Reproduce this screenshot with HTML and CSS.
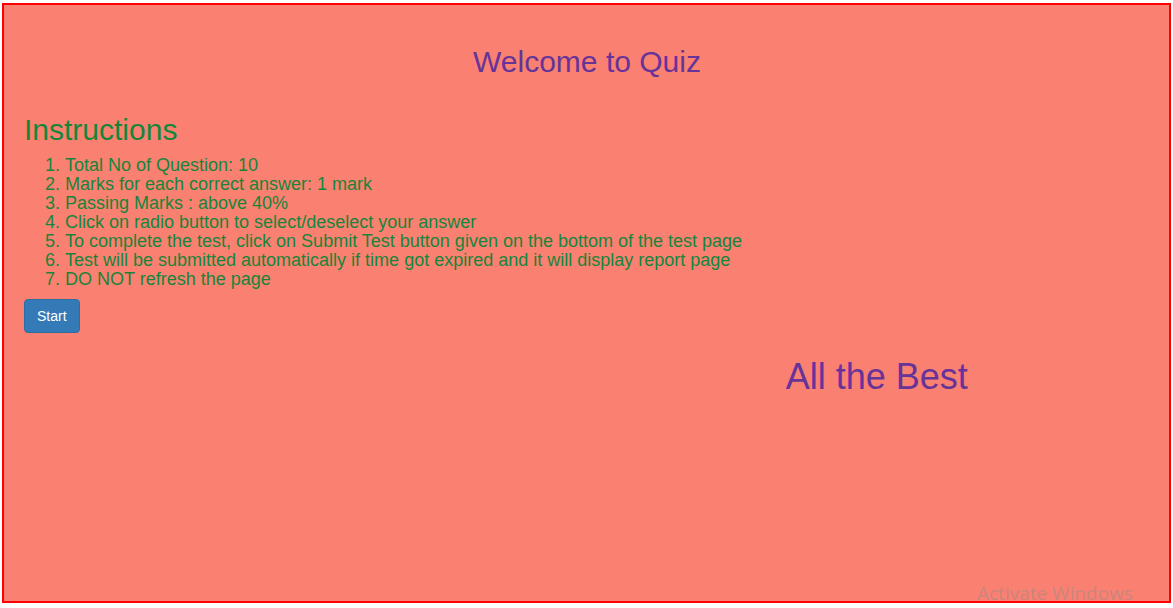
FILE: index.html
```html
<!DOCTYPE html>
<html>
<head>
<meta charset="utf-8">
<title>Quiz</title>
<link rel="stylesheet" href="styles.css">
</head>
<body>
<div class="frame">
  <h2 class="welcome">Welcome to Quiz</h2>
  <h2 class="instr-title">Instructions</h2>
  <ol class="instr-list">
    <li>Total No of Question: 10</li>
    <li>Marks for each correct answer: 1 mark</li>
    <li>Passing Marks : above 40%</li>
    <li>Click on radio button to select/deselect your answer</li>
    <li>To complete the test, click on Submit Test button given on the bottom of the test page</li>
    <li>Test will be submitted automatically if time got expired and it will display report page</li>
    <li>DO NOT refresh the page</li>
  </ol>
  <button class="btn-start" type="button">Start</button>
  <div class="row">
    <div class="col"></div>
    <div class="col col-center"><h1 class="best">All the Best</h1></div>
  </div>
  <div class="watermark">Activate Windows</div>
</div>
</body>
</html>
```

FILE: styles.css
```css
html, body {
  margin: 0;
  padding: 0;
  background: #ffffff;
}
body {
  padding: 3px 2px 0 2px;
  font-family: "Liberation Sans", Arial, sans-serif;
}
.frame {
  position: relative;
  box-sizing: border-box;
  width: 1169px;
  height: 600px;
  border: 2px solid #ff0000;
  background: #fa8072;
  padding: 40px 20px 0 20px;
  overflow: hidden;
}
.welcome {
  margin: 0 0 0 1px;
  font-size: 30px;
  line-height: 33px;
  font-weight: normal;
  color: #663399;
  text-align: center;
}
.instr-title {
  margin: 35px 0 0 0;
  font-size: 30px;
  line-height: 33px;
  font-weight: normal;
  color: #178539;
}
.instr-list {
  margin: 10px 0 0 0;
  padding-left: 41px;
  font-size: 18px;
  line-height: 19px;
  color: #178539;
}
.btn-start {
  display: block;
  margin-top: 10px;
  box-sizing: border-box;
  height: 34px;
  padding: 6px 12px;
  font-family: "Liberation Sans", Arial, sans-serif;
  font-size: 14px;
  line-height: 20px;
  color: #ffffff;
  background: #337ab7;
  border: 1px solid #2e6da4;
  border-radius: 4px;
}
.row {
  display: grid;
  grid-template-columns: 1fr 1fr;
  margin: 0 -20px;
}
.col-center {
  text-align: center;
}
.best {
  margin: 24px 2px 0 0;
  font-size: 36px;
  line-height: 40px;
  font-weight: normal;
  color: #663399;
}
.watermark {
  position: absolute;
  left: 973px;
  top: 574px;
  font-family: "Open Sans", "Noto Sans", sans-serif;
  font-size: 19px;
  line-height: 28px;
  color: rgba(140, 140, 140, 0.45);
  white-space: nowrap;
}
```
